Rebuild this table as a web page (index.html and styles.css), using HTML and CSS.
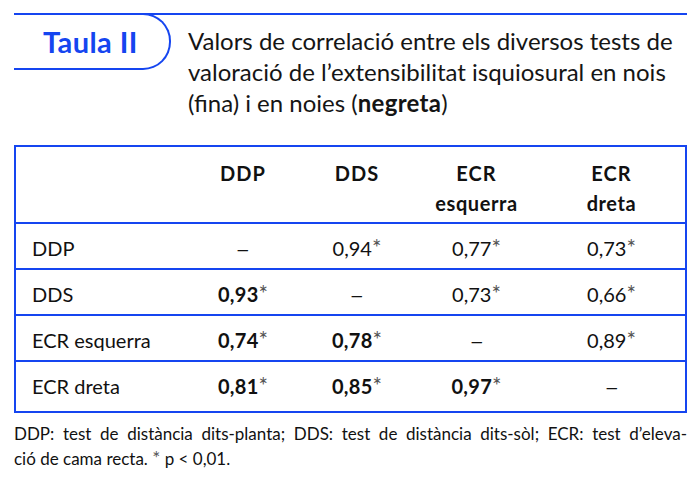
FILE: index.html
```html
<!DOCTYPE html>
<html lang="ca">
<head>
<meta charset="utf-8">
<link rel="stylesheet" href="styles.css">
</head>
<body>
<div class="page">
  <header class="head">
    <div class="tag">Taula II</div>
    <p class="title">Valors de correlació entre els diversos tests de valoració de l’extensibilitat isquiosural en nois (fina) i en noies (<b>negreta</b>)</p>
  </header>
  <div class="table">
    <div class="row hdr">
      <div class="c lab"></div>
      <div class="c">DDP</div>
      <div class="c">DDS</div>
      <div class="c">ECR<br><span class="sub">esquerra</span></div>
      <div class="c">ECR<br><span class="sub">dreta</span></div>
    </div>
    <div class="row">
      <div class="c lab">DDP</div>
      <div class="c"><span class="dash">–</span></div>
      <div class="c">0,94<span class="st">*</span></div>
      <div class="c">0,77<span class="st">*</span></div>
      <div class="c">0,73<span class="st">*</span></div>
    </div>
    <div class="row">
      <div class="c lab">DDS</div>
      <div class="c"><b>0,93</b><span class="st">*</span></div>
      <div class="c"><span class="dash">–</span></div>
      <div class="c">0,73<span class="st">*</span></div>
      <div class="c">0,66<span class="st">*</span></div>
    </div>
    <div class="row">
      <div class="c lab">ECR esquerra</div>
      <div class="c"><b>0,74</b><span class="st">*</span></div>
      <div class="c"><b>0,78</b><span class="st">*</span></div>
      <div class="c"><span class="dash">–</span></div>
      <div class="c">0,89<span class="st">*</span></div>
    </div>
    <div class="row last">
      <div class="c lab">ECR dreta</div>
      <div class="c"><b>0,81</b><span class="st">*</span></div>
      <div class="c"><b>0,85</b><span class="st">*</span></div>
      <div class="c"><b>0,97</b><span class="st">*</span></div>
      <div class="c"><span class="dash">–</span></div>
    </div>
  </div>
  <div class="foot">
    <span class="l1">DDP: test de distància dits-planta; DDS: test de distància dits-sòl; ECR: test d’eleva-</span>
    <span class="l2">ció de cama recta. <span class="st">*</span> p &lt; 0,01.</span>
  </div>
</div>
</body>
</html>
```

FILE: styles.css
```css
html, body {
  margin: 0;
  padding: 0;
  background: #fff;
}
body {
  font-family: Lato, "Open Sans", sans-serif;
  color: #111;
}
.page {
  width: 673px;
  margin-left: 14px;
  padding-top: 13px;
}
.head {
  display: flex;
  align-items: flex-start;
  border-top: 2px solid #1545f0;
}
.tag {
  box-sizing: border-box;
  flex: 0 0 157px;
  height: 57px;
  margin-top: -2px;
  border: 2px solid #1545f0;
  border-left: none;
  border-radius: 0 28px 28px 0;
  color: #1545f0;
  font-weight: 700;
  font-size: 29px;
  letter-spacing: 0.4px;
  line-height: 53px;
  padding-left: 29px;
}
.title {
  margin: 10px 0 0 17px;
  font-size: 24px;
  line-height: 31px;
  color: #151515;
}
.table {
  margin-top: 27px;
  border: 2px solid #1545f0;
}
.row {
  display: grid;
  grid-template-columns: 170px 114px 114px 125px 145px;
  height: 41px;
  padding-top: 3px;
  align-items: center;
  border-top: 2px solid #1545f0;
  font-size: 20px;
}
.row.hdr {
  border-top: none;
  height: 75px;
  align-items: start;
  font-weight: 700;
  line-height: 30px;
  padding-top: 11px;
  box-sizing: border-box;
  letter-spacing: 1px;
}
.row.last {
  height: 51px;
  align-items: start;
  padding-top: 12px;
  box-sizing: border-box;
}
.c {
  text-align: center;
}
.c.lab {
  text-align: left;
  padding-left: 16px;
}
.sub {
  font-size: 20px;
  letter-spacing: 0.6px;
}
b {
  letter-spacing: 0.3px;
}
.dash {
  display: inline-block;
  transform: scaleX(1.3);
}
.st {
  font-weight: 400;
  color: #555;
  font-size: 1.12em;
  line-height: 0;
}
.foot {
  margin-top: 8px;
  font-size: 17px;
  line-height: 25px;
}
.foot .l1 {
  display: block;
  text-align: justify;
  text-align-last: justify;
}
.foot .l2 {
  display: block;
}
```
